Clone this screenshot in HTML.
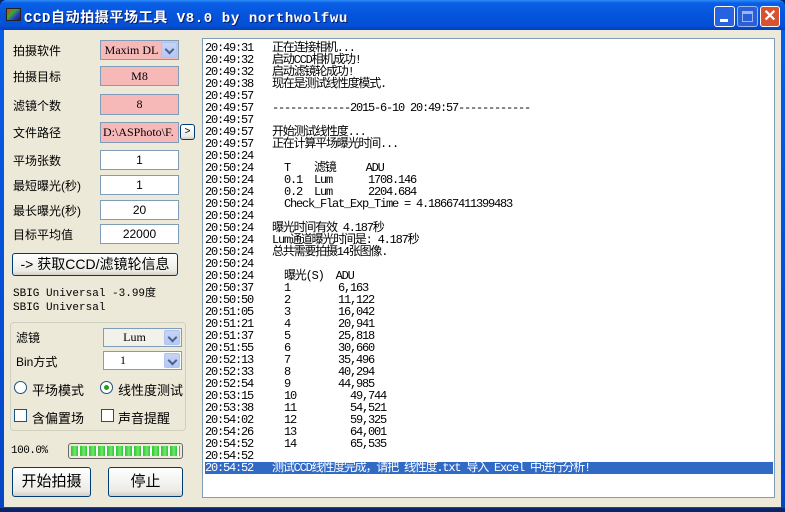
<!DOCTYPE html>
<html><head><meta charset="utf-8"><style>
*{margin:0;padding:0;box-sizing:border-box}
body{width:785px;height:512px;overflow:hidden;background:#0a246a;font-family:"Liberation Sans","Noto Sans CJK SC",sans-serif;font-size:12px;position:relative}
.win{position:absolute;left:0;top:0;width:785px;height:508px;background:linear-gradient(#0a5ee8,#0551d8 50%,#0446c6);border-radius:6px 6px 0 0}
.title{position:absolute;left:0;top:0;width:785px;height:30px;background:linear-gradient(#2d8cf7 0%,#0a5fe6 10%,#0554dc 50%,#0450d6 85%,#0340b8 100%);border-radius:7px 7px 0 0}
.ttext{position:absolute;left:24px;top:7px;color:#fff;font-weight:bold;font-family:"Liberation Mono","Noto Sans CJK SC",monospace;font-size:14px;letter-spacing:0.6px;text-shadow:1px 1px #0a1e6a}
.body{position:absolute;left:4px;top:30px;width:777px;height:477px;background:#ece9d8}
.a{position:absolute}
.lbl{position:absolute;left:13px;font-size:12px;color:#000}
.box{position:absolute;border:1px solid #7f9db9;background:#fff;text-align:center;font-family:"Liberation Serif","Noto Sans CJK SC",serif;font-size:12px}
.pink{background:#f7b8b8}
.arr{position:absolute;right:1px;top:1px;bottom:1px;width:16px;background:linear-gradient(#c6d3f7,#b5c8f5);border:1px solid #b2c3ec;border-radius:2px}
.arr:after{content:"";position:absolute;left:4px;top:3px;width:5px;height:5px;border-right:2px solid #4d6185;border-bottom:2px solid #4d6185;transform:rotate(45deg)}
.btn{position:absolute;border:1px solid #003c74;border-radius:3px;background:linear-gradient(#fff,#ecebe6 80%,#d6d0c5);text-align:center;color:#000}
.log{position:absolute;left:202px;top:38px;width:573px;height:460px;background:#fff;border:1px solid #7f9db9;font-family:"Liberation Mono","Noto Sans CJK SC",monospace;font-size:12px;letter-spacing:-1.2px}
.l{position:absolute;left:2px;height:12px;line-height:12px;white-space:pre;width:568px}
.l span{position:absolute;left:67px;white-space:pre}
.sel{background:#316ac5;color:#fff}
</style></head><body>
<div class="win"></div>
<div class="title">
<div class="a" style="left:6px;top:8px;width:15px;height:13px;background:linear-gradient(135deg,#e33 0%,#3a3 40%,#33c 70%,#222 100%);border:1px solid #222"></div>
<div class="ttext">CCD自动拍摄平场工具 V8.0 by northwolfwu</div>
<div class="a" style="left:714px;top:6px;width:21px;height:21px;border:1px solid #fff;border-radius:3px;background:#2663e0"><div class="a" style="left:5px;top:12px;width:8px;height:3px;background:#fff"></div></div>
<div class="a" style="left:737px;top:6px;width:21px;height:21px;border:1px solid #9bb6ee;border-radius:3px;background:#2a5fd8"><div class="a" style="left:4px;top:4px;width:11px;height:11px;border:1px solid #9bb6ee;border-top-width:3px"></div></div>
<div class="a" style="left:760px;top:6px;width:20px;height:21px;border:1px solid #fff;border-radius:3px;background:#d9512f;color:#fff;font-weight:bold;font-size:16px;line-height:19px;text-align:center">✕</div>
</div>
<div class="body"></div>

<div class="lbl" style="top:42px">拍摄软件</div>
<div class="box pink" style="left:100px;top:40px;width:79px;height:20px;line-height:18px;padding-right:16px">Maxim DL<div class="arr"></div></div>
<div class="lbl" style="top:68px">拍摄目标</div>
<div class="box pink" style="left:100px;top:66px;width:79px;height:20px;line-height:18px">M8</div>
<div class="lbl" style="top:97px">滤镜个数</div>
<div class="box pink" style="left:100px;top:94px;width:79px;height:21px;line-height:18px">8</div>
<div class="lbl" style="top:124px">文件路径</div>
<div class="box pink" style="left:100px;top:122px;width:79px;height:21px;line-height:19px;text-align:left;padding-left:2px;overflow:hidden;white-space:nowrap">D:\ASPhoto\F.</div>
<div class="btn" style="left:180px;top:124px;width:15px;height:16px;line-height:14px;font-size:10px">&gt;</div>
<div class="lbl" style="top:152px">平场张数</div>
<div class="box" style="left:100px;top:150px;width:79px;height:20px;line-height:18px;font-family:'Liberation Sans',sans-serif">1</div>
<div class="lbl" style="top:177px">最短曝光(秒)</div>
<div class="box" style="left:100px;top:175px;width:79px;height:20px;line-height:18px;font-family:'Liberation Sans',sans-serif">1</div>
<div class="lbl" style="top:202px">最长曝光(秒)</div>
<div class="box" style="left:100px;top:200px;width:79px;height:20px;line-height:18px;font-family:'Liberation Sans',sans-serif">20</div>
<div class="lbl" style="top:226px">目标平均值</div>
<div class="box" style="left:100px;top:224px;width:79px;height:20px;line-height:18px;font-family:'Liberation Sans',sans-serif">22000</div>

<div class="btn" style="left:12px;top:253px;width:166px;height:23px;line-height:20px;font-size:14px">-&gt; 获取CCD/滤镜轮信息</div>
<div class="a" style="left:13px;top:284px;font-family:'Liberation Mono','Noto Sans CJK SC',monospace;font-size:11px">SBIG Universal -3.99度</div>
<div class="a" style="left:13px;top:302px;font-family:'Liberation Mono',monospace;font-size:11px">SBIG Universal</div>

<div class="a" style="left:10px;top:322px;width:176px;height:109px;border:1px solid #d0d0bf;border-radius:4px"></div>
<div class="lbl" style="left:16px;top:329px">滤镜</div>
<div class="box" style="left:103px;top:328px;width:79px;height:19px;line-height:17px;background:#f2f1ea;padding-right:16px">Lum<div class="arr"></div></div>
<div class="lbl" style="left:16px;top:353px;font-size:12px">Bin方式</div>
<div class="box" style="left:103px;top:351px;width:79px;height:19px;line-height:17px;text-align:left;padding-left:16px">1<div class="arr"></div></div>
<div class="a" style="left:14px;top:381px;width:13px;height:13px;border:1px solid #1c5180;border-radius:50%;background:#fff"></div>
<div class="lbl" style="left:32px;top:380px;font-size:13px">平场模式</div>
<div class="a" style="left:100px;top:381px;width:13px;height:13px;border:1px solid #1c5180;border-radius:50%;background:#fff"><div class="a" style="left:3px;top:3px;width:5px;height:5px;border-radius:50%;background:#21a121"></div></div>
<div class="lbl" style="left:118px;top:380px;font-size:13px">线性度测试</div>
<div class="a" style="left:14px;top:409px;width:13px;height:13px;border:1px solid #1c5180;background:#fff"></div>
<div class="lbl" style="left:32px;top:408px;font-size:13px">含偏置场</div>
<div class="a" style="left:101px;top:409px;width:13px;height:13px;border:1px solid #1c5180;background:#fff"></div>
<div class="lbl" style="left:118px;top:408px;font-size:13px">声音提醒</div>

<div class="a" style="left:11px;top:445px;font-family:'Liberation Mono',monospace;font-size:11px;letter-spacing:-0.5px">100.0%</div>
<div class="a" style="left:68px;top:443px;width:115px;height:16px;border:1px solid #686868;border-radius:3px;background:#fff;padding:2px 2px;background-image:repeating-linear-gradient(90deg,#2fc52f 0,#6ee86e 4px,#2fc52f 7px,#fff 7px,#fff 9px);background-origin:content-box;background-clip:content-box"></div>

<div class="btn" style="left:12px;top:467px;width:79px;height:30px;line-height:28px;font-size:15px">开始拍摄</div>
<div class="btn" style="left:108px;top:467px;width:75px;height:30px;line-height:28px;font-size:15px">停止</div>

<div class="log">
<div class="l" style="top:3px">20:49:31<span>正在连接相机...</span></div>
<div class="l" style="top:15px">20:49:32<span>启动CCD相机成功!</span></div>
<div class="l" style="top:27px">20:49:32<span>启动滤镜轮成功!</span></div>
<div class="l" style="top:39px">20:49:38<span>现在是测试线性度模式.</span></div>
<div class="l" style="top:51px">20:49:57</div>
<div class="l" style="top:63px">20:49:57<span>-------------2015-6-10 20:49:57------------</span></div>
<div class="l" style="top:75px">20:49:57</div>
<div class="l" style="top:87px">20:49:57<span>开始测试线性度...</span></div>
<div class="l" style="top:99px">20:49:57<span>正在计算平场曝光时间...</span></div>
<div class="l" style="top:111px">20:50:24</div>
<div class="l" style="top:123px">20:50:24<span>  T    滤镜     ADU</span></div>
<div class="l" style="top:135px">20:50:24<span>  0.1  Lum      1708.146</span></div>
<div class="l" style="top:147px">20:50:24<span>  0.2  Lum      2204.684</span></div>
<div class="l" style="top:159px">20:50:24<span>  Check_Flat_Exp_Time = 4.18667411399483</span></div>
<div class="l" style="top:171px">20:50:24</div>
<div class="l" style="top:183px">20:50:24<span>曝光时间有效 4.187秒</span></div>
<div class="l" style="top:195px">20:50:24<span>Lum通道曝光时间是: 4.187秒</span></div>
<div class="l" style="top:207px">20:50:24<span>总共需要拍摄14张图像.</span></div>
<div class="l" style="top:219px">20:50:24</div>
<div class="l" style="top:231px">20:50:24<span>  曝光(S)  ADU</span></div>
<div class="l" style="top:243px">20:50:37<span>  1        6,163</span></div>
<div class="l" style="top:255px">20:50:50<span>  2        11,122</span></div>
<div class="l" style="top:267px">20:51:05<span>  3        16,042</span></div>
<div class="l" style="top:279px">20:51:21<span>  4        20,941</span></div>
<div class="l" style="top:291px">20:51:37<span>  5        25,818</span></div>
<div class="l" style="top:303px">20:51:55<span>  6        30,660</span></div>
<div class="l" style="top:315px">20:52:13<span>  7        35,496</span></div>
<div class="l" style="top:327px">20:52:33<span>  8        40,294</span></div>
<div class="l" style="top:339px">20:52:54<span>  9        44,985</span></div>
<div class="l" style="top:351px">20:53:15<span>  10         49,744</span></div>
<div class="l" style="top:363px">20:53:38<span>  11         54,521</span></div>
<div class="l" style="top:375px">20:54:02<span>  12         59,325</span></div>
<div class="l" style="top:387px">20:54:26<span>  13         64,001</span></div>
<div class="l" style="top:399px">20:54:52<span>  14         65,535</span></div>
<div class="l" style="top:411px">20:54:52</div>
<div class="l sel" style="top:423px">20:54:52<span>测试CCD线性度完成，请把 线性度.txt 导入 Excel 中进行分析!</span></div>
</div>
</body></html>
